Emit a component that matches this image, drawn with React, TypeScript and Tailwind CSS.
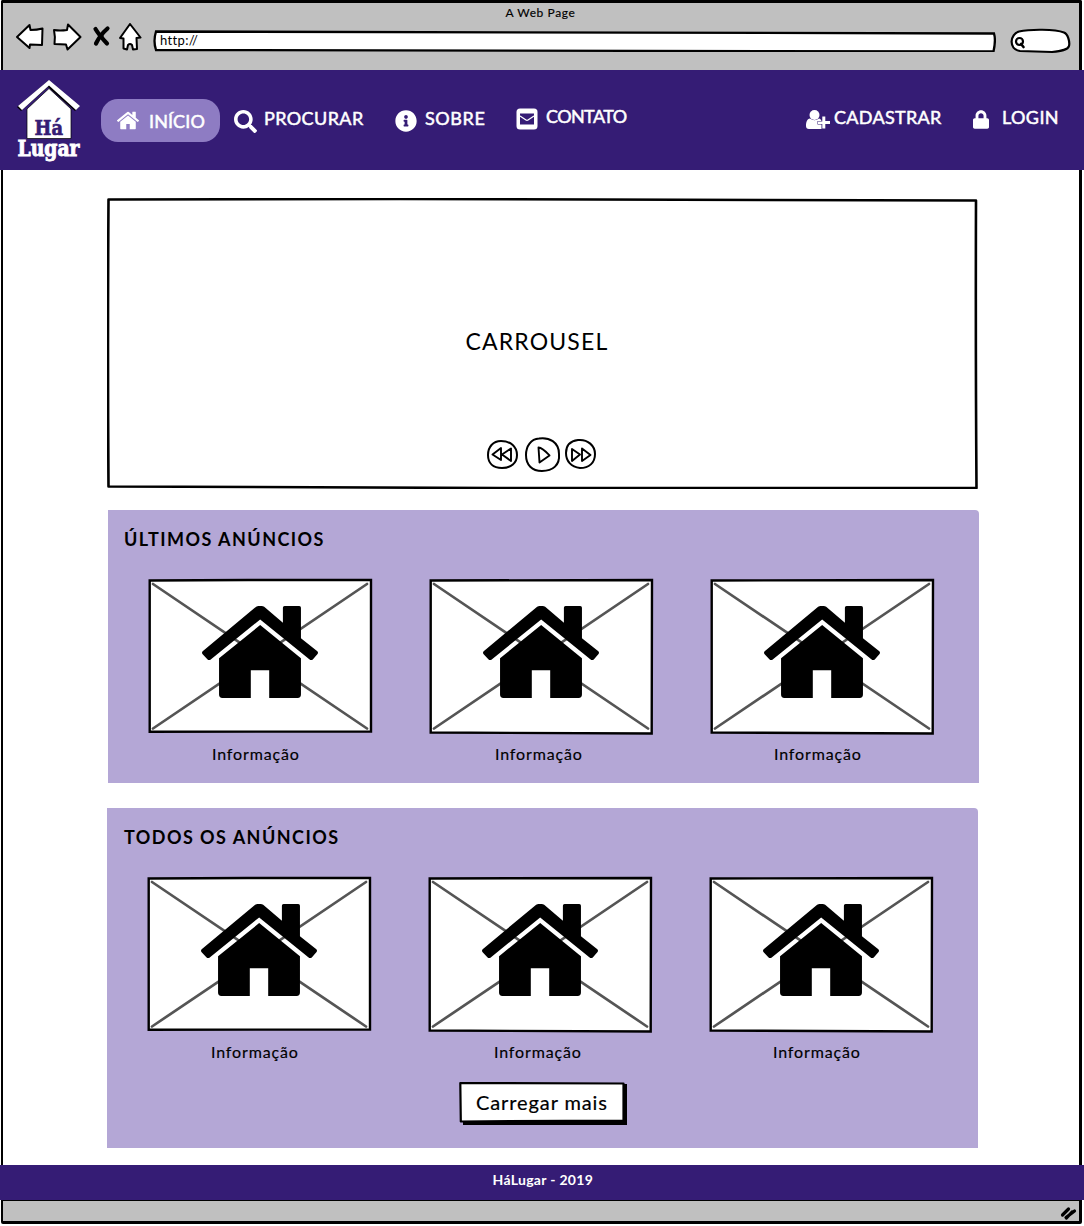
import type { ReactNode } from "react";
import { FaInfoCircle, FaLock, FaSearch } from "react-icons/fa";

function HouseIcon({ className }: { className: string }) {
  return (
    <svg viewBox="306 318 347 275" className={className} fill="currentColor">
      <path d="M468 320Q480 315 492 320L548 368V323Q548 318 553 318H597Q602 318 602 323V414L651 453Q655 458 651 462L638 477Q633 482 627 477L480 358L333 477Q327 482 322 477L308 462Q304 458 308 453Z" />
      <path d="M480 375L602 474V583Q602 593 592 593H507V510H452V593H367Q357 593 357 583V474Z" />
    </svg>
  );
}

function Logo() {
  return (
    <svg viewBox="0 0 70 90" className="ml-[14px] mt-[7px] h-[90px] w-[70px] shrink-0 overflow-visible">
      <path d="M34 4L65 30L61 34L34 10L7 34L3 30Z" fill="#000" />
      <path d="M35 3L66 29L62 33L35 8.500L8 33L4 29Z" fill="#fff" />
      <path d="M35 11.500L57 32V61.500H13V32Z" fill="#fff" stroke="#000" strokeWidth=".7" />
      <text x="20.500" y="58.300" textLength="28.500" lengthAdjust="spacingAndGlyphs" fontFamily="'DejaVu Serif', serif" fontWeight="700" fontSize="21" fill="#351c75" stroke="#351c75" strokeWidth=".7">Há</text>
      <text x="3.500" y="79" textLength="62" lengthAdjust="spacingAndGlyphs" fontFamily="'DejaVu Serif', serif" fontWeight="700" fontSize="21.500" fill="#fff" stroke="#fff" strokeWidth=".9">Lugar</text>
    </svg>
  );
}

function BrowserBar() {
  return (
    <header className="ml-px mr-[2px] h-[70px] rounded-t-[2px] border-l-2 border-r-[3px] border-t-[3px] border-black bg-[#c0c0c0]">
      <div className="flex h-5 justify-center pt-[2px] text-[12px] leading-4 tracking-[0.6px] [-webkit-text-stroke:0.15px_black]">
        <span className="w-[71px] whitespace-nowrap">A Web Page</span>
      </div>
      <div className="flex pl-[12px]">
        <svg viewBox="15 23 128 30" className="h-[30px] w-[128px]" fill="#fff" stroke="#000" strokeWidth="2" strokeLinejoin="round">
          <path d="M17 37L29.500 25L30.500 30Q37 30 42.500 28.500L42 45L30 44.500L29.500 48Z" />
          <path d="M54 30Q60 31 67 30L68 24.500L80.500 37L67.500 49.500L66 44.500L54.500 44Q55.500 37 54 30Z" />
          <path d="M120 38L130 24L140.500 37.500L136.500 38L137 49L133 49.500L132 45Q130 43 128 45L127 49.500L123.500 48.500V38.500Z" />
          <path d="M95.500 29Q99 35 107 43.500M107.500 28.500Q100 35 96 43.500" strokeWidth="4.200" strokeLinecap="round" />
          <path d="M101.500 33V39" strokeWidth="4" />
        </svg>
        <div className="relative ml-[10px] mt-[5px] h-[24px] w-[843px]">
          <svg viewBox="0 0 843 24" className="absolute inset-0 h-6 w-[843px]" fill="#fff" stroke="#000" strokeWidth="2.300">
            <path d="M3 3.500L841 5.500Q843 12 840.500 23.500L3 22Q0 13 3 3.500Z" />
          </svg>
          <span className="relative ml-[7px] mt-[4px] block text-[13px] leading-4 tracking-[0.35px]">http://</span>
        </div>
        <svg viewBox="1010 28 62 26" className="ml-[14px] mt-[5px] h-[26px] w-[62px]" fill="#fff" stroke="#000" strokeWidth="2.200" strokeLinecap="round">
          <path d="M1019 31.500C1030 29 1055 29 1064 32.500C1068 34 1070 42 1069 46C1068 50 1061 51 1052 52L1020 51C1008 49 1010 34 1019 31.500Z" />
          <circle cx="1019.500" cy="41.500" r="3.500" />
          <path d="M1021 44L1023.500 47" strokeWidth="2.600" />
        </svg>
      </div>
    </header>
  );
}

function MainNav() {
  return (
    <nav className="flex h-[100px] items-start bg-[#351c75] text-[18px] leading-6 text-white [-webkit-text-stroke:0.5px_white]">
      <Logo />
      <a className="ml-[17px] mt-[29px] flex h-[43px] w-[119px] items-center rounded-[17px] bg-[#8e7cc3] pl-[16px]">
        <HouseIcon className="h-[19px] w-[22px]" />
        <span className="ml-[10px] w-[56px] whitespace-nowrap tracking-[0.1px]">INÍCIO</span>
      </a>
      <a className="ml-[14px] mt-[36px] flex">
        <FaSearch className="mt-[4px] size-[23px]" />
        <span className="ml-[7px] w-[100px] whitespace-nowrap tracking-[0.4px]">PROCURAR</span>
      </a>
      <a className="ml-[31px] mt-[36px] flex">
        <FaInfoCircle className="mt-[4px] size-[22px]" />
        <span className="ml-[8px] w-[61px] whitespace-nowrap tracking-[0.6px]">SOBRE</span>
      </a>
      <a className="ml-[30px] mt-[34px] flex">
        <svg viewBox="0 0 22 22" className="mt-[4px] size-[22px]">
          <rect x=".5" y=".5" width="21" height="21" rx="3.500" fill="#fff" />
          <path d="M4 5.500H18V16.500H4Z" fill="#351c75" />
          <path d="M4 8L10 12Q11 12.700 12 12L18 8" fill="none" stroke="#fff" strokeWidth="1.300" />
        </svg>
        <span className="ml-[8px] w-[81px] whitespace-nowrap tracking-[-0.6px]">CONTATO</span>
      </a>
      <a className="ml-[179px] mt-[35px] flex">
        <svg viewBox="0 0 25 19" className="mt-[5px] h-[19px] w-[25px]" fill="#fff">
          <circle cx="8.500" cy="5" r="5" />
          <path d="M4 8.500Q8.500 12 13 8.500C14 8.700 15 9.500 15.500 11H11.500V14.500H15.500V19H3Q0 19 0 16C0 12 1 9 4 8.500Z" />
          <path d="M16.300 6.500H19.300V11H24V14H19.300V18.500H16.300V14H12V11.500H16.300Z" />
        </svg>
        <span className="ml-[3px] w-[108px] whitespace-nowrap tracking-[0.3px]">CADASTRAR</span>
      </a>
      <a className="ml-[31px] mt-[35px] flex">
        <FaLock className="mt-[5px] h-[19px] w-[16px]" />
        <span className="ml-[13px] w-[57px] whitespace-nowrap tracking-[0.4px]">LOGIN</span>
      </a>
    </nav>
  );
}

function Carousel() {
  return (
    <section className="relative flex h-[291px] w-[871px] flex-col items-center">
      <svg viewBox="107 198 871 291" className="absolute inset-0 h-[291px] w-[871px]" fill="#fff" stroke="#000" strokeWidth="2.600" strokeLinejoin="round">
        <path d="M108.500 199.500L400 199L976 200.500Q975.500 350 976.500 488L500 488L108.500 486.500Q107.500 350 108.500 199.500Z" />
      </svg>
      <h1 className="relative mr-[11px] mt-[127px] w-[143px] whitespace-nowrap text-[23px] leading-8 tracking-[1.15px]">CARROUSEL</h1>
      <svg viewBox="486 436 112 38" className="relative ml-[-1px] mt-[79px] h-[38px] w-[112px]" fill="#fff" stroke="#000" strokeWidth="2" strokeLinejoin="round">
        <path d="M501 441C511 441 517 447 517 455C517 463 511 468 502 468C493 468 488 463 488 455C488 447 493 441 501 441Z" />
        <path d="M501 448V460L492.500 454.500ZM511 448.500V461L502 454.500Z" strokeWidth="1.900" />
        <path d="M539 438.500C549 437 559 442 559 454C560 465 553 471 542 471C532 471 526 465 526 455C526 446 531 439 539 438.500Z" />
        <path d="M538.500 447.500C543 448 547 453 549.500 455.500L539.500 462.500Z" strokeWidth="1.900" />
        <path d="M578 440C588 439 595 446 595 454C595 463 589 468 580 468C571 467 566 461 566 453C566 445 570 441 578 440Z" />
        <path d="M572 449L580 454.500L572 461ZM582 448.500L590.500 455L582 461Z" strokeWidth="1.900" />
      </svg>
    </section>
  );
}

function ListingCard({ tall, labelShift }: { tall: boolean; labelShift: string }) {
  return (
    <article className="w-[225px]">
      <div className="relative h-[156px] w-[225px] pl-[54px] pt-[28px]">
        <svg viewBox="0 0 225 156" className="absolute inset-0 h-[156px] w-[225px] overflow-visible" fill="#fff" strokeLinecap="round">
          <path d={tall ? "M1.700 2.500L223 2L222.700 155.500L1.700 154.500Z" : "M1.700 2.500L100 2L223 2V153.500L1.700 153.700Z"} stroke="#000" strokeWidth="2.400" />
          <path d="M5 6L219 150.500M219 6L5 150.500" stroke="#555" strokeWidth="2.700" />
        </svg>
        <HouseIcon className="relative h-[92px] w-[116px]" />
      </div>
      <p className={`${labelShift} mt-[8px] w-[88px] whitespace-nowrap text-[16px] leading-6 tracking-[0.85px] [-webkit-text-stroke:0.15px_black]`}>Informação</p>
    </article>
  );
}

function ListingPanel({ title, className, titleInset, children }: { title: string; className: string; titleInset: string; children?: ReactNode }) {
  return (
    <section className={`${className} w-[871px] rounded-tr-[4px] bg-[#b4a7d6]`}>
      <h2 className={`${titleInset} pt-[17px] text-[18px] font-bold leading-6 tracking-[1.45px]`}>{title}</h2>
      <div className="ml-[40px] mt-[27px] flex gap-[56px]">
        <ListingCard tall={false} labelShift="ml-[64px]" />
        <ListingCard tall labelShift="ml-[66px]" />
        <ListingCard tall labelShift="ml-[64px]" />
      </div>
      {children}
    </section>
  );
}

export default function App() {
  return (
    <div className="flex h-[1226px] w-[1084px] flex-col overflow-hidden bg-white font-['Lato',sans-serif] text-black">
      <BrowserBar />
      <MainNav />
      <main className="ml-px mr-[2px] h-[995px] border-l-2 border-r-[3px] border-black bg-white pl-[104px] pt-[28px]">
        <Carousel />
        <ListingPanel title="ÚLTIMOS ANÚNCIOS" titleInset="pl-[16px]" className="ml-px mt-[21px] h-[273px]" />
        <ListingPanel title="TODOS OS ANÚNCIOS" titleInset="pl-[17px]" className="mt-[25px] h-[340px]">
          <div className="ml-[352px] mt-[17px] flex h-[44px] w-[168px]">
            <button className="relative h-[44px] w-[168px]">
              <svg viewBox="0 0 168 44" className="absolute inset-0 h-[44px] w-[168px]">
                <path d="M4 40L164 3L168 3V44H4Z" />
                <path d="M1.300 2L164.500 2.500V39.500L1.800 40.500Z" fill="#fff" stroke="#000" strokeWidth="2.200" strokeLinejoin="round" />
              </svg>
              <span className="relative ml-[17px] block w-[132px] whitespace-nowrap pb-[3px] text-left text-[20px] leading-6 tracking-[0.9px] [-webkit-text-stroke:0.2px_black]">Carregar mais</span>
            </button>
          </div>
        </ListingPanel>
      </main>
      <footer className="flex h-[35px] shrink-0 justify-center bg-[#351c75] pl-[2px] pt-[6px] text-[14px] font-bold leading-[18px] tracking-[0.3px] text-white">
        <span className="w-[101px] whitespace-nowrap">HáLugar - 2019</span>
      </footer>
      <div className="ml-px mr-[2px] flex h-[24px] shrink-0 justify-end rounded-b-[2px] border-b-[3px] border-l-2 border-r-[3px] border-t border-black bg-[#c0c0c0]">
        <svg viewBox="0 0 18 16" className="mr-[2px] mt-[4px] h-4 w-[18px]" stroke="#000" strokeWidth="3.200" strokeLinecap="round">
          <path d="M3.500 10L9.500 4M7 12.500L15.500 6M7.500 13L13 7" />
        </svg>
      </div>
    </div>
  );
}
